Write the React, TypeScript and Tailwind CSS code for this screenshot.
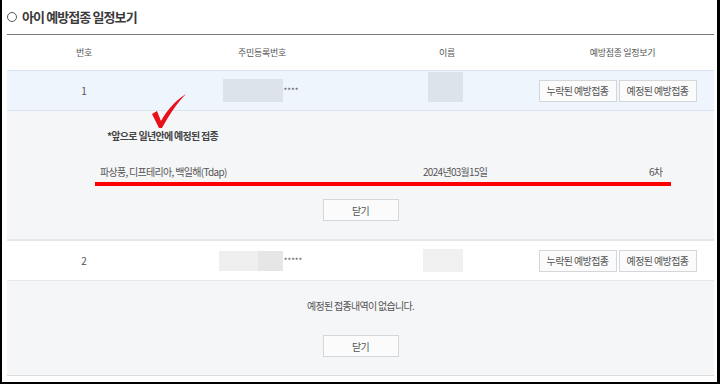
import React from "react";

const font = "font-['Noto_Sans_CJK_KR','Noto_Sans',sans-serif]";

function Btn({ children, w = "w-[78px]" }: { children: React.ReactNode; w?: string }) {
  return (
    <div
      className={`${w} h-[22px] flex items-center justify-center border border-[#d3d6da] bg-[#fbfbfb] text-[10px] tracking-[-0.6px] text-[#555]`}
    >
      {children}
    </div>
  );
}

export default function App() {
  return (
    <div
      className={`${font} relative w-[720px] h-[384px] bg-white border-l-2 border-r-[3px] border-b-2 border-black text-[#666] overflow-hidden`}
    >
      {/* title */}
      <div className="h-[34px] flex items-center pl-[5px] gap-[5px]">
        <span className="w-[10px] h-[10px] rounded-full border-[1.5px] border-[#555]" />
        <span className="text-[13px] font-semibold tracking-[-0.9px] text-[#3a3a3a]">
          아이 예방접종 일정보기
        </span>
      </div>

      <div className="ml-[5px] w-[707px] border-t border-[#7a7a7a]">
        {/* header */}
        <div className="grid grid-cols-[154px_202px_168px_183px] h-[35px] items-center text-center text-[9px] tracking-[-0.3px] text-[#555]">
          <div>번호</div>
          <div>주민등록번호</div>
          <div>이름</div>
          <div>예방접종 일정보기</div>
        </div>

        {/* row 1 */}
        <div className="grid grid-cols-[154px_202px_168px_183px] h-[41px] items-center text-center text-[10px] bg-[#eef5fc] border-t border-b border-[#d9e4ee] text-[#555]">
          <div>1</div>
          <div className="flex items-center justify-center pr-[3px]">
            <div className="w-[60px] h-[23px] bg-[#dde3ea]" />
            <span className="text-[8px] ml-[1px]">****</span>
          </div>
          <div className="flex justify-center pr-[4px] self-start pt-[1px]">
            <div className="w-[35px] h-[30px] bg-[#dde3ea]" />
          </div>
          <div className="flex justify-center gap-[2px] pr-[10px]">
            <Btn>누락된 예방접종</Btn>
            <Btn>예정된 예방접종</Btn>
          </div>
        </div>

        {/* detail 1 */}
        <div className="h-[128px] bg-[#f5f6f8] flex flex-col pt-[18px] text-[10px] tracking-[-0.7px] text-[#555]">
          <div className="h-[14px] leading-[14px] pl-[100px] font-bold text-[#444]">
            *앞으로 일년안에 예정된 접종
          </div>
          <div className="h-[14px] leading-[14px] mt-[22px] flex pl-[93px]">
            <span className="w-[323px]">파상풍, 디프테리아, 백일해(Tdap)</span>
            <span className="w-[226px]">2024년03월15일</span>
            <span>6차</span>
          </div>
          <div className="mt-[3px] ml-[88px] w-[576px] h-[4px] bg-[#ff0000]" />
          <div className="mt-[13px] flex justify-center">
            <Btn w="w-[76px]">닫기</Btn>
          </div>
        </div>

        {/* row 2 */}
        <div className="grid grid-cols-[154px_202px_168px_183px] h-[42px] items-center text-center text-[10px] bg-white border-t-2 border-b border-[#e6e7e9] text-[#555]">
          <div>2</div>
          <div className="flex items-center justify-center pr-[3px]">
            <div className="w-[39px] h-[20px] bg-[#efefef]" />
            <div className="w-[25px] h-[20px] bg-[#e6e6e6]" />
            <span className="text-[8px] ml-[1px]">*****</span>
          </div>
          <div className="flex justify-center pr-[8px]">
            <div className="w-[40px] h-[23px] bg-[#f0f0f0]" />
          </div>
          <div className="flex justify-center gap-[2px] pr-[10px]">
            <Btn>누락된 예방접종</Btn>
            <Btn>예정된 예방접종</Btn>
          </div>
        </div>

        {/* detail 2 */}
        <div className="h-[95px] bg-[#f5f6f8] border-b border-[#dcdcdc] flex flex-col pt-[18px] text-[10px] tracking-[-0.7px] text-[#555]">
          <div className="h-[14px] leading-[14px] text-center">예정된 접종내역이 없습니다.</div>
          <div className="mt-[22px] flex justify-center">
            <Btn w="w-[76px]">닫기</Btn>
          </div>
        </div>
      </div>

      {/* red check annotation */}
      <svg
        className="absolute left-[146px] top-[92px]"
        width="42"
        height="40"
        viewBox="0 0 42 40"
      >
        <path
          d="M4,22 L9,19 L13,29 C19,18 28,8 38,2 C29,11 21,23 14,36 L11,36 Z"
          fill="#e8101a"
        />
      </svg>
    </div>
  );
}
